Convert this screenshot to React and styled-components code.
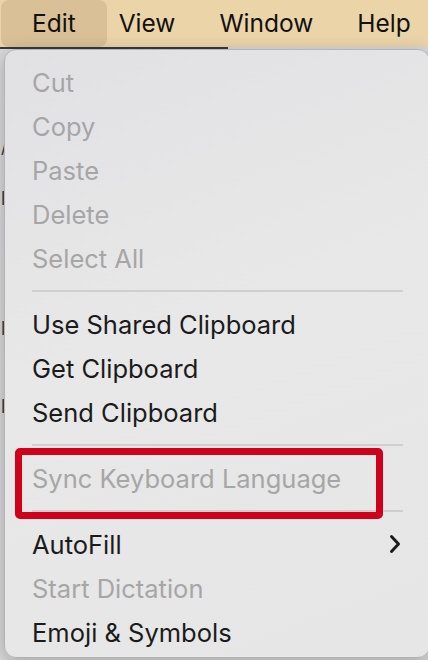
import React from "react";
import styled, { createGlobalStyle } from "styled-components";

const GlobalStyle = createGlobalStyle`
  html, body {
    margin: 0;
    padding: 0;
    width: 428px;
    height: 660px;
    overflow: hidden;
    background: #dcdcdc;
    font-family: Inter, "Noto Sans", "Liberation Sans", sans-serif;
  }
`;

const menuBar = ["Edit", "View", "Window", "Help"];

const items = [
  { label: "Cut", disabled: true },
  { label: "Copy", disabled: true },
  { label: "Paste", disabled: true },
  { label: "Delete", disabled: true },
  { label: "Select All", disabled: true },
  { sep: true },
  { label: "Use Shared Clipboard" },
  { label: "Get Clipboard" },
  { label: "Send Clipboard" },
  { sep: true },
  { label: "Sync Keyboard Language", disabled: true },
  { sep: true },
  { label: "AutoFill", submenu: true },
  { label: "Start Dictation", disabled: true },
  { label: "Emoji & Symbols" },
];

// bits of the window behind the menu, only a sliver shows at the left edge
const bgLines = ["", "", "", "/", "", "l", "", "", "", "", "l", "", "", "l", "", ""];

const Chevron = () => (
  <svg width="12" height="20" viewBox="0 0 12 20">
    <path d="M2.5 2.5 L9.5 10 L2.5 17.5" fill="none" stroke="#1b1b1b" strokeWidth="3" strokeLinecap="round" strokeLinejoin="round" />
  </svg>
);

const App = () => {
  return (
    <Screen>
      <GlobalStyle />
      <MenuBar>
        {menuBar.map((m, i) => (
          <BarItem key={m} active={i === 0}>
            {m}
          </BarItem>
        ))}
      </MenuBar>
      <Desk>
        <Behind>
          {bgLines.map((l, i) => (
            <BgLine key={i}>{l}</BgLine>
          ))}
        </Behind>
        <Panel>
          {items.map((it, i) =>
            it.sep ? (
              <Separator key={i} />
            ) : (
              <Row key={i} disabled={it.disabled}>
                <span>{it.label}</span>
                {it.submenu && <Chevron />}
              </Row>
            )
          )}
          <Highlight />
        </Panel>
      </Desk>
    </Screen>
  );
};

export default App;

const Screen = styled.div`
  width: 428px;
  height: 660px;
  display: flex;
  flex-direction: column;
  overflow: hidden;
`;

const MenuBar = styled.div`
  height: 47px;
  flex-shrink: 0;
  display: flex;
  align-items: stretch;
  background: #ecd4a9;
`;

const BarItem = styled.div`
  display: flex;
  align-items: center;
  padding: ${(p) => (p.active ? "0 31px 2px" : "0 22px 2px")};
  margin: ${(p) => (p.active ? "0 -10px 0 1px" : "0")};
  border-radius: 8px;
  background: ${(p) => (p.active ? "#d9c096" : "transparent")};
  font-size: 24.5px;
  color: #111;
`;

const Desk = styled.div`
  flex: 1;
  position: relative;
  background: #d9d9dc;

  &::before {
    content: "";
    display: block;
    width: 228px;
    height: 2px;
    background: #3a3a3a;
  }
`;

const Behind = styled.div`
  display: flex;
  flex-direction: column;
  gap: 6px;
  padding-top: 10px;
  color: #3a3a3a;
  font-size: 18px;
  line-height: 20px;
`;

const BgLine = styled.div`
  height: 20px;
  padding-left: 1px;
  white-space: nowrap;
`;

const Panel = styled.div`
  position: absolute;
  left: 4px;
  top: 2px;
  right: -2px;
  bottom: 2px;
  box-sizing: border-box;
  padding: 10px 0 0 0;
  border: 1px solid #b4b4b6;
  border-radius: 12px;
  background: linear-gradient(160deg, #e1e1e4 0%, #e8e8e8 45%, #e6e6e6 100%);
  box-shadow: 0 4px 18px rgba(0, 0, 0, 0.25);
  display: flex;
  flex-direction: column;
`;

const Row = styled.div`
  height: 44px;
  display: flex;
  align-items: center;
  justify-content: space-between;
  padding: 0 28px 0 27px;
  font-size: 25.5px;
  color: ${(p) => (p.disabled ? "#a6a6a6" : "#1b1b1b")};
`;

const Separator = styled.div`
  height: 22px;
  display: flex;
  align-items: center;
  padding: 0 26px 0 27px;

  &::after {
    content: "";
    flex: 1;
    height: 2px;
    background: #cfcfcf;
  }
`;

const Highlight = styled.div`
  position: absolute;
  left: 10px;
  top: 398px;
  width: 368px;
  height: 71px;
  box-sizing: border-box;
  border: 7px solid #d0021b;
  border-radius: 5px;
`;
